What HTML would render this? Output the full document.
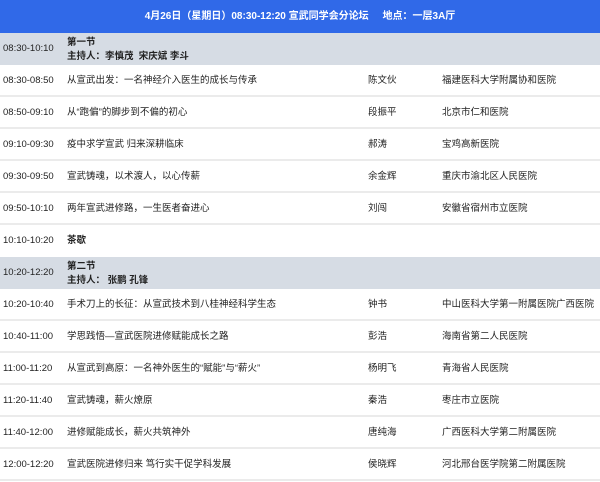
<!DOCTYPE html><html><head><meta charset="utf-8"><style>
body{margin:0;width:600px;height:482px;overflow:hidden;background:#fff;font-family:"Liberation Sans","Noto Sans CJK SC",sans-serif;font-size:9.5px;color:#222}
.h{position:absolute;left:0;top:0;width:600px;height:33px;background:#3069e8;color:#fff;font-weight:bold;text-align:center;line-height:33px;font-size:10px}
.r{position:absolute;left:0;width:600px;height:30px;border-bottom:2px solid #ebebeb;background:#fff}
.s{background:#d6dce4;border-bottom:none;height:32px}
.r span{position:absolute;top:0;line-height:31px;white-space:nowrap}
.t{left:3px}.a{left:67px}.p{left:368px}.o{left:442px}
.s .a{line-height:14px;top:3px;font-weight:bold}
.b{font-weight:bold}
</style></head><body>
<div class="h">4月26日（星期日）08:30-12:20 宣武同学会分论坛 &nbsp;&nbsp;&nbsp; 地点：一层3A厅</div>
<div class="r s" style="top:33px"><span class="t">08:30-10:10</span><span class="a">第一节<br>主持人：李慎茂&nbsp;&nbsp;宋庆斌 李斗</span></div>
<div class="r" style="top:65px"><span class="t">08:30-08:50</span><span class="a">从宣武出发：一名神经介入医生的成长与传承</span><span class="p">陈文伙</span><span class="o">福建医科大学附属协和医院</span></div>
<div class="r" style="top:97px"><span class="t">08:50-09:10</span><span class="a">从“跑偏”的脚步到不偏的初心</span><span class="p">段振平</span><span class="o">北京市仁和医院</span></div>
<div class="r" style="top:129px"><span class="t">09:10-09:30</span><span class="a">疫中求学宣武 归来深耕临床</span><span class="p">郝涛</span><span class="o">宝鸡高新医院</span></div>
<div class="r" style="top:161px"><span class="t">09:30-09:50</span><span class="a">宣武铸魂，以术渡人，以心传薪</span><span class="p">余金辉</span><span class="o">重庆市渝北区人民医院</span></div>
<div class="r" style="top:193px"><span class="t">09:50-10:10</span><span class="a">两年宣武进修路，一生医者奋进心</span><span class="p">刘闯</span><span class="o">安徽省宿州市立医院</span></div>
<div class="r" style="top:225px;border-bottom:none"><span class="t">10:10-10:20</span><span class="a b">茶歇</span></div>
<div class="r s" style="top:257px"><span class="t">10:20-12:20</span><span class="a">第二节<br>主持人：&nbsp;张鹏 孔锋</span></div>
<div class="r" style="top:289px"><span class="t">10:20-10:40</span><span class="a">手术刀上的长征：从宣武技术到八桂神经科学生态</span><span class="p">钟书</span><span class="o">中山医科大学第一附属医院广西医院</span></div>
<div class="r" style="top:321px"><span class="t">10:40-11:00</span><span class="a">学思践悟—宣武医院进修赋能成长之路</span><span class="p">彭浩</span><span class="o">海南省第二人民医院</span></div>
<div class="r" style="top:353px"><span class="t">11:00-11:20</span><span class="a">从宣武到高原：一名神外医生的“赋能”与“薪火”</span><span class="p">杨明飞</span><span class="o">青海省人民医院</span></div>
<div class="r" style="top:385px"><span class="t">11:20-11:40</span><span class="a">宣武铸魂，薪火燎原</span><span class="p">秦浩</span><span class="o">枣庄市立医院</span></div>
<div class="r" style="top:417px"><span class="t">11:40-12:00</span><span class="a">进修赋能成长，薪火共筑神外</span><span class="p">唐纯海</span><span class="o">广西医科大学第二附属医院</span></div>
<div class="r" style="top:449px"><span class="t">12:00-12:20</span><span class="a">宣武医院进修归来 笃行实干促学科发展</span><span class="p">侯晓辉</span><span class="o">河北邢台医学院第二附属医院</span></div>
</body></html>
